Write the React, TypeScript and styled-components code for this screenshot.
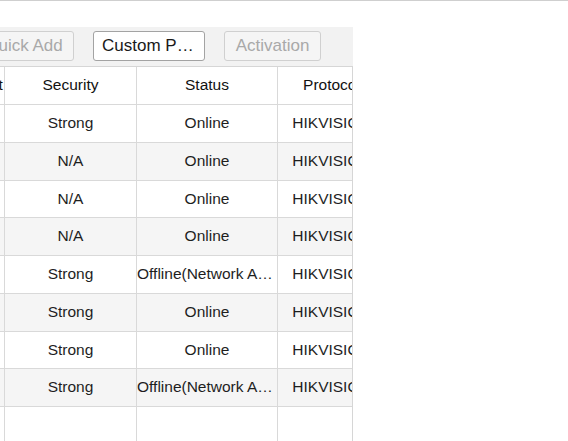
import { useLayoutEffect, useRef } from 'react';
import styled, { createGlobalStyle } from 'styled-components';

const GlobalStyle = createGlobalStyle`
  html, body {
    margin: 0;
    padding: 0;
    background: #fff;
    font-family: "Liberation Sans", Arial, sans-serif;
  }
`;

// horizontal scroll of the device list (both toolbar and grid scroll together)
const SCROLL_X = 147;

const columns = [
  { key: 'ip', title: 'IP', width: 120 },
  { key: 'port', title: 'Port', width: 32 },
  { key: 'security', title: 'Security', width: 132 },
  { key: 'status', title: 'Status', width: 141 },
  { key: 'protocol', title: 'Protocol', width: 108 },
  { key: 'serial', title: 'Serial No.', width: 200 },
];

const template = columns.map((c) => `${c.width}px`).join(' ');

type Device = Record<string, string>;

const online = 'Online';
const offline = 'Offline(Network Abnormal)';

const devices: Device[] = [
  { ip: '10.11.36.101', port: '8000', security: 'Strong', status: online, protocol: 'HIKVISION', serial: 'DS-2CD2143G0-I' },
  { ip: '10.11.36.102', port: '8000', security: 'N/A', status: online, protocol: 'HIKVISION', serial: 'DS-2CD2043G0-I' },
  { ip: '10.11.36.103', port: '8000', security: 'N/A', status: online, protocol: 'HIKVISION', serial: 'DS-2CD2T43G0-I5' },
  { ip: '10.11.36.104', port: '8000', security: 'N/A', status: online, protocol: 'HIKVISION', serial: 'DS-2DE4425IW-DE' },
  { ip: '10.11.36.105', port: '8000', security: 'Strong', status: offline, protocol: 'HIKVISION', serial: 'DS-2CD2743G0-IZS' },
  { ip: '10.11.36.106', port: '8000', security: 'Strong', status: online, protocol: 'HIKVISION', serial: 'DS-2CD2143G0-I' },
  { ip: '10.11.36.107', port: '8000', security: 'Strong', status: online, protocol: 'HIKVISION', serial: 'DS-2CD2343G0-I' },
  { ip: '10.11.36.108', port: '8000', security: 'Strong', status: offline, protocol: 'HIKVISION', serial: 'DS-2CD2643G0-IZS' },
];

const TopLine = styled.div`
  height: 0;
  border-top: 1px solid #cfcfcf;
  margin-bottom: 26px;
`;

const Panel = styled.div`
  width: 353px;
  display: flex;
  flex-direction: column;
`;

const ToolbarViewport = styled.div`
  overflow: hidden;
  background: #f2f2f2;
`;

const Toolbar = styled.div`
  display: flex;
  align-items: center;
  gap: 19px;
  width: max-content;
  padding: 4px 160px 5px 10px;
`;

const Button = styled.button<{ $w: number }>`
  box-sizing: border-box;
  width: ${(p) => p.$w}px;
  height: 30px;
  padding: 0 8px;
  border: 1px solid #a3a3a3;
  border-radius: 3px;
  background: #fff;
  color: #1a1a1a;
  font-family: "Liberation Sans", Arial, sans-serif;
  font-size: 17px;
  white-space: nowrap;
  overflow: hidden;
  text-overflow: ellipsis;
  cursor: pointer;

  &:disabled {
    border-color: #d0d0d0;
    background: #f5f5f5;
    color: #a9a9a9;
    cursor: default;
  }
`;

const GridViewport = styled.div`
  box-sizing: border-box;
  height: 375px;
  overflow: hidden;
  border-top: 1px solid #d6d6d6;
  border-right: 1px solid #d6d6d6;
`;

const Grid = styled.div`
  display: flex;
  flex-direction: column;
  width: max-content;
  height: 100%;
`;

const Row = styled.div<{ $striped?: boolean; $head?: boolean }>`
  box-sizing: border-box;
  display: grid;
  grid-template-columns: ${template};
  height: ${(p) => (p.$head ? '38px' : '37.75px')};
  flex-shrink: 0;
  border-bottom: 1px solid #d9d9d9;
  background: ${(p) => (p.$striped ? '#f5f5f5' : '#fff')};
  color: ${(p) => (p.$head ? '#111' : '#1e1e1e')};
`;

const FillerRow = styled.div`
  display: grid;
  grid-template-columns: ${template};
  flex: 1;
`;

const Cell = styled.div`
  box-sizing: border-box;
  border-right: 1px solid #d9d9d9;
  font-size: 15.5px;
  line-height: 36px;
  text-align: center;
  white-space: nowrap;
  overflow: hidden;
  text-overflow: ellipsis;
`;

const App = () => {
  const toolbarRef = useRef<HTMLDivElement>(null);
  const gridRef = useRef<HTMLDivElement>(null);

  useLayoutEffect(() => {
    if (toolbarRef.current) toolbarRef.current.scrollLeft = SCROLL_X;
    if (gridRef.current) gridRef.current.scrollLeft = SCROLL_X;
  }, []);

  return (
    <>
      <GlobalStyle />
      <TopLine />
      <Panel>
        <ToolbarViewport ref={toolbarRef}>
          <Toolbar>
            <Button $w={92}>Add</Button>
            <Button $w={100} disabled>Quick Add</Button>
            <Button $w={112} title='Custom Protocol'>Custom Protocol</Button>
            <Button $w={97} disabled>Activation</Button>
          </Toolbar>
        </ToolbarViewport>
        <GridViewport ref={gridRef}>
          <Grid>
            <Row $head>
              {columns.map((c) => (
                <Cell key={c.key}>{c.title}</Cell>
              ))}
            </Row>
            {devices.map((d, i) => (
              <Row key={d.ip} $striped={i % 2 === 1}>
                {columns.map((c) => (
                  <Cell key={c.key} title={d[c.key]}>{d[c.key]}</Cell>
                ))}
              </Row>
            ))}
            <FillerRow>
              {columns.map((c) => (
                <Cell key={c.key} />
              ))}
            </FillerRow>
          </Grid>
        </GridViewport>
      </Panel>
    </>
  );
};

export default App;
